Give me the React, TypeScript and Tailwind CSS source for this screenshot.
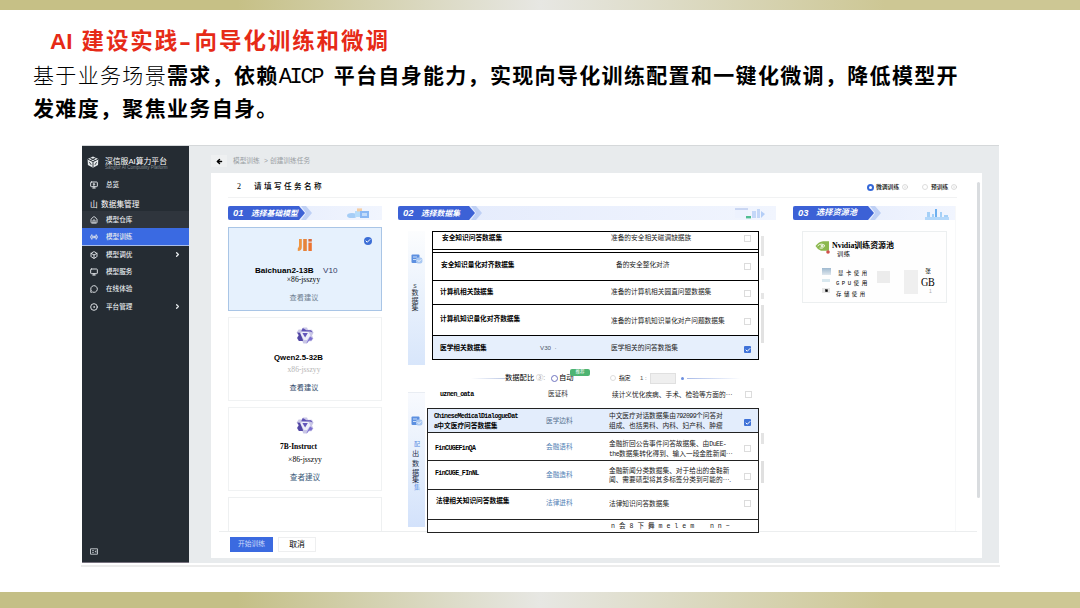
import type { ReactNode } from "react";
import clsx from "clsx";
import {
  ArrowLeft,
  Box,
  Check,
  ChevronRight,
  CircleDot,
  House,
  Info,
  MessageCircle,
  Monitor,
  MonitorPlay,
  Radio,
  Square,
} from "lucide-react";

const sans = "font-['Liberation_Sans','Noto_Sans_CJK_SC',sans-serif]";
const serif = "font-['Liberation_Serif','Noto_Sans_CJK_SC',serif]";

function Logo() {
  return (
    <svg viewBox="0 0 12 12" className="size-[12px] shrink-0">
      <path d="M6 0.4 11.3 3 11 9 6 11.7 0.9 9 0.6 3z" fill="#e4e8ea" />
      <path d="M0.8 3.2 6 5.7 11.2 3.2M6 5.7v5.8M3 1.9l5.4 2.6M8.8 1.8 3.4 4.5M2.4 6.2l1.8 2.6M8 8.8l1.6-2.6" stroke="#252c33" strokeWidth="0.9" fill="none" />
    </svg>
  );
}

function BaichuanIcon() {
  return (
    <svg viewBox="0 0 16 14" className="h-[14px] w-[16px]">
      <path d="M4.8 1v8.2Q4.8 12.6 0.8 13V10Q2 9.5 2 7.5V1z" fill="#ee9440" />
      <path d="M6.2 1h3.6v12H6.2z" fill="#e6843a" />
      <path d="M11.4 4.6h3.4V13h-3.4z" fill="#ec7430" />
      <path d="M11.4 1h3.4v2.6h-3.4z" fill="#d9693a" />
    </svg>
  );
}

function QwenIcon() {
  return (
    <svg viewBox="0 0 18 17" className="h-[17px] w-[18px]">
      <path d="M7 0.6h4l1 2.2h4l1.6 3-1.6 2.8 1.4 2.8-2 2.8h-3.2L10.6 16.4H7.4L6.2 14H2.6L0.8 11l1.6-2.8L0.6 5.4l2-2.8h3.2z" fill="#c9c6e6" />
      <path d="M6.8 1 5.2 4.2l8.8.2 2.6 1.2L15 3.2h-4.6z" fill="#5e50b4" />
      <path d="M1.2 5.6 4 5.8l3.2 7.8L6.4 14H3l-1.8-3 1.6-2.8z" fill="#5145a4" />
      <path d="M16.8 11.2 14 9.6l-3.6 6.6h.6l2.2-2.6h2.2z" fill="#7d70d0" />
      <path d="M5.6 5h7l1.8 3.6L11 13H8L4.6 6.6z" fill="#efeefa" />
      <path d="M6.4 6h5.4L9.1 10.6z" fill="#6455bb" />
    </svg>
  );
}

function StackIcon() {
  return (
    <svg viewBox="0 0 12 10" className="h-[10px] w-[12px]">
      <rect x="0.5" y="0.5" width="8" height="8.6" rx="1" fill="#5d90e0" />
      <path d="M2 3h4M2 5.5h3" stroke="#d7e6fb" strokeWidth="0.9" />
      <rect x="5" y="3.6" width="6.4" height="5.8" rx="2" fill="#a9c8f2" />
      <path d="M6.6 6.2 8 7.6l2.2-2.2" stroke="#fff" strokeWidth="0.9" fill="none" />
    </svg>
  );
}

function CollapseIcon() {
  return (
    <svg viewBox="0 0 8 7" className="mt-auto mb-[7px] ml-[8px] h-[7px] w-[8px]">
      <path d="M0.5 0.8h7v5.4h-7z" stroke="#b9bfc4" fill="none" />
      <path d="M2 2.6h2M2 4.4h2" stroke="#b9bfc4" strokeWidth="0.8" />
      <path d="M4.6 3.5 6.4 2v3z" fill="#b9bfc4" />
    </svg>
  );
}

type NavProps = {
  icon: ReactNode;
  label: string;
  className?: string;
  arrow?: boolean;
};

function NavItem({ icon, label, className, arrow }: NavProps) {
  return (
    <div className={clsx("flex items-center pl-[8px] text-[6.6px] text-[#e6eaed]", className)}>
      <span className="w-4 [&>svg]:size-[8px] [&>svg]:stroke-[2.8]">{icon}</span>
      <span className="flex-1 font-medium">{label}</span>
      {arrow && <ChevronRight className="mr-[8px] size-[7px]" strokeWidth={4.5} />}
    </div>
  );
}

function Sidebar() {
  return (
    <aside className="flex w-[107px] flex-col border-b border-[#77727f] bg-[#252c33]">
      <div className="flex h-[31px] items-center gap-[6px] pl-[5px]">
        <Logo />
        <div className="flex flex-col whitespace-nowrap pt-[4px]">
          <span className="text-[7.8px] leading-[9px] text-white">深信服AI算力平台</span>
          <span className="text-[4.5px] leading-[4px] text-[#848b91]">Sangfor AI Computility Platform</span>
        </div>
      </div>
      <NavItem icon={<MonitorPlay />} label="总览" className="h-[16px]" />
      <div className="flex h-[18px] items-center pt-[6px] pl-[8px] text-[7.7px] text-white">
        <span className="w-[11px]">山</span>数据集管理
      </div>
      <NavItem icon={<House />} label="模型仓库" className="h-[17px] bg-[#2f353d]" />
      <NavItem icon={<Radio />} label="模型训练" className="h-[18px] border-b border-[#a8bce8] bg-[#3a6ae2]" />
      <NavItem icon={<Box />} label="模型调优" className="h-[17px]" arrow />
      <NavItem icon={<Monitor />} label="模型服务" className="h-[17.5px]" />
      <NavItem icon={<MessageCircle />} label="在线体验" className="h-[17.5px]" />
      <NavItem icon={<CircleDot />} label="平台管理" className="h-[17px]" arrow />
      <CollapseIcon />
    </aside>
  );
}

type StepProps = {
  no: string;
  title: string;
  art: ReactNode;
  labelClass: string;
};

function StepHeader({ no, title, art, labelClass }: StepProps) {
  return (
    <div className="flex h-[14px] shrink-0 items-center justify-between bg-linear-to-r from-[#e3eafc] to-[#f1f5fe] pr-1">
      <div className="flex h-full">
        <div
          className={clsx(
            "flex h-full items-center rounded-l-[2px] bg-[#3c61d6] pt-px pl-[5px] font-bold text-white italic [clip-path:polygon(0_0,calc(100%-6px)_0,100%_50%,calc(100%-6px)_100%,0_100%)]",
            labelClass,
          )}
        >
          <span className="w-[18px] text-[9.4px]">{no}</span>
          <span>{title}</span>
        </div>
        <div className="-ml-[4px] h-full w-[11px] bg-[#bfd0f5] [clip-path:polygon(0_0,5px_0,100%_50%,5px_100%,0_100%,5px_50%)]" />
      </div>
      {art}
    </div>
  );
}

function CloudArt() {
  return (
    <svg viewBox="0 0 28 12" className="mr-1 h-[12px] w-[28px]">
      <ellipse cx="6" cy="8.5" rx="5" ry="2.6" fill="#a5cdf6" />
      <path d="M9 4h8v6H9z" fill="#b6dcfa" />
      <path d="M11 1.4h5v3h-5z" fill="#f3cda4" />
      <path d="M14 4h9v7h-9z" fill="#8bb8f4" />
      <path d="M16 6h5v3h-5z" fill="#c4dcfa" />
    </svg>
  );
}

function WindowArt() {
  return (
    <svg viewBox="0 0 32 12" className="mr-[6px] h-[12px] w-[32px]">
      <path d="M1 2h13v9H1z" fill="#edf2fe" />
      <path d="M1 2h13" stroke="#a4b8e6" />
      <path d="M12 9h5v2.4h-5z" fill="#4fbd92" />
      <path d="M18 4h4v7h-4zM23 2h3v9h-3z" fill="#c3d7f8" />
      <path d="M27 4l4 3-4 4z" fill="#b4cef7" />
    </svg>
  );
}

function CityArt() {
  return (
    <svg viewBox="0 0 24 13" className="mr-[2px] h-[13px] w-[24px]">
      <path d="M2 5h3v8H2zM7 7h2v6H7zM15 5h2v8h-2zM19 8h4v5h-4z" fill="#a5d0f7" />
      <path d="M10 2h2v11h-2z" fill="#6eb0ef" />
      <path d="M0 10h24v3H0z" fill="#b4d8fa" />
    </svg>
  );
}

function ModelColumn() {
  return (
    <div className="flex w-[154px] flex-col">
      <StepHeader no="01" title="选择基础模型" labelClass="w-[77px] text-[7.8px]" art={<CloudArt />} />
      <div className="relative mt-[7px] flex h-[84px] flex-col items-center border border-[#a9c5e6] bg-[#e6f1fd] pt-[10px]">
        <div className="absolute top-[9px] right-[9px] flex size-[8px] items-center justify-center rounded-full bg-[#3c6ed6]">
          <Check className="size-[6px] text-white" strokeWidth={4} />
        </div>
        <BaichuanIcon />
        <div className="mt-[14px] flex w-full pl-[26px] text-[8.1px] leading-[10px]">
          <b className="w-[68px]">Baichuan2-13B</b>
          <span className="text-[#333b66]">V10</span>
        </div>
        <div className={clsx("-mt-px -ml-[3px] text-[7.6px] leading-[9px]", serif)}>×86-jsszyy</div>
        <div className="mt-[9px] -ml-[2px] text-[7.2px] leading-[10px] text-[#6d7c8e]">查看建议</div>
      </div>
      <div className="mt-[6px] flex h-[84px] flex-col items-center border border-[#f0f2f3] pt-[9px]">
        <QwenIcon />
        <b className="mt-[9px] -ml-[13px] text-[7.8px] leading-[10px]">Qwen2.5-32B</b>
        <div className={clsx("mt-[2px] -ml-[2px] text-[7.6px] leading-[10px] text-[#b5b5b5]", serif)}>x86-jsszyy</div>
        <div className="mt-[8px] -ml-[2px] text-[7.2px] leading-[10px] text-[#2e4668]">查看建议</div>
      </div>
      <div className="mt-[6px] flex h-[84px] flex-col items-center border border-[#f0f2f3] pt-[9px]">
        <QwenIcon />
        <b className={clsx("mt-[8px] -ml-[13px] text-[7.5px] leading-[10px]", serif)}>7B-Instruct</b>
        <div className={clsx("mt-[3px] text-[7.7px] leading-[10px]", serif)}>×86-jsszyy</div>
        <div className="mt-[8px] text-[7.6px] leading-[10px] text-[#3a5a78]">查者建议</div>
      </div>
      <div className="mt-[6px] h-[34px] border border-b-0 border-[#eef0f1]" />
    </div>
  );
}

type RowProps = {
  height: string;
  name?: ReactNode;
  nameClass?: string;
  tag?: string;
  tagClass?: string;
  desc?: ReactNode;
  descClass?: string;
  box?: "empty" | "checked" | "none";
  boxClass?: string;
};

// name / tag / description / checkbox, aligned from the right edge
function Row({ height, name, nameClass, tag, tagClass, desc, descClass, box = "empty", boxClass }: RowProps) {
  return (
    <div className={clsx("flex items-start text-[6.7px] leading-[9px] whitespace-nowrap", height)}>
      <div className={clsx("flex-1 font-bold", nameClass)}>{name}</div>
      <div className={clsx("w-[64px]", tagClass)}>{tag}</div>
      <div className={clsx("w-[133px] text-[#222]", descClass)}>{desc}</div>
      <div className={clsx("w-[14px]", boxClass)}>
        {box === "empty" && <div className="size-[7px] border border-[#dcdcdc]" />}
        {box === "checked" && (
          <div className="flex size-[7px] items-center justify-center rounded-[1px] bg-[#3f72d8]">
            <Check className="size-[6px] text-white" strokeWidth={4} />
          </div>
        )}
      </div>
    </div>
  );
}

function Mono({ children }: { children: string }) {
  return <span className="font-['Liberation_Mono',monospace] text-[6.6px] tracking-[-0.6px]">{children}</span>;
}

function DatasetColumn() {
  return (
    <div className="flex w-[378px] flex-col">
      <StepHeader no="02" title="选择数据集" labelClass="w-[77px] text-[7.8px]" art={<WindowArt />} />
      <div className="mt-[11px] flex h-[129px] shrink-0 pl-[10px]">
        <div className="flex h-[134px] w-[17px] flex-col items-center bg-linear-to-b from-[#fcfdfe] via-[#e9f1fc] to-[#d8e6fb] pt-[23px]">
          <StackIcon />
          <div className="mt-[19px] -ml-[3px] flex flex-col items-center text-[7px] leading-[7.6px] text-[#2a3240]">
            <span className="text-[5px] leading-[6px]">S</span>
            <span>数</span>
            <span>据</span>
            <span>集</span>
          </div>
        </div>
        <div className="ml-[7px] w-[327px] border border-b-0 border-black bg-white">
          <Row height="h-[18px] border-b border-black" name="安全知识问答数据集" nameClass="pl-[9px] pt-[1px]" desc="准备的安全相关磁调缺据族" descClass="pt-[1px]" boxClass="pt-[3px]" />
          <div className="h-[3px] border-b border-black" />
          <Row height="h-[28px] border-b border-black" name="安全知识量化对齐数据集" nameClass="pl-[8px] pt-[7px]" desc="备的安全整化对济" descClass="pl-[5px] pt-[7px]" boxClass="pt-[10px]" />
          <Row height="h-[24px] border-b border-black" name="计算机相关鼓据集" nameClass="pl-[7px] pt-[6px]" desc="准备的计算机相关圆直问盟数据集" descClass="pt-[6px]" boxClass="pt-[9px]" />
          <Row height="h-[31px] border-b border-black" name="计算机知识量化对齐数据集" nameClass="pl-[7px] pt-[9px]" desc="准备的计算机知识量化对产问题数据集" descClass="pt-[11px]" boxClass="pt-[13px]" />
          <Row height="h-[24px] border-b border-black bg-[#e6effc]" name="医学相关数据集" nameClass="pl-[7px] pt-[7px]" tag="V30  ·" tagClass="-ml-[7px] mr-[7px] pt-[7px] text-[6.2px] whitespace-pre text-[#4a5566]" desc="医学相关的问答数指集" descClass="pt-[7px]" box="checked" boxClass="pt-[10px]" />
        </div>
        <div className="ml-[2px] flex w-[3px] flex-col pt-[5px]">
          <div className="h-[20px] bg-[#e6e6e6]" />
          <div className="mt-[12px] h-[12px] bg-[#ececec]" />
          <div className="mt-[13px] h-[6px] bg-[#e6e6e6]" />
          <div className="mt-[6px] h-[38px] bg-[#e2e2e2]" />
        </div>
      </div>

      <div className="mt-[8px] flex h-[20px] shrink-0 items-center pl-[73px] text-[7.3px] whitespace-nowrap">
        <span className="h-px w-[34px] bg-linear-to-r from-white to-[#bcc8e4]" />
        <span className="w-[31px]">数据配比</span>
        <span className="w-[15px] text-[#999]">③:</span>
        <span className="mr-[1px] size-[7px] rounded-full border border-[#6f74c0]" />
        <span className="relative w-[51px]">
          自动
          <span className="absolute -top-[4px] left-[11px] flex h-[7px] w-[20px] items-center justify-center rounded-[2px] bg-[#4eb472] text-[4.6px] text-white">推荐</span>
        </span>
        <span className="mr-[3px] size-[6px] rounded-full border border-[#ddd]" />
        <span className="w-[21px] text-[5.8px]">指定</span>
        <span className="w-[10px] text-[6px] text-[#555]">1 :</span>
        <span className="h-[11px] w-[26px] border border-[#e0e0e0] bg-[#efefef]" />
        <span className="ml-[5px] size-[3px] rounded-full bg-[#6c8fe0]" />
        <span className="ml-[3px] h-px w-[54px] bg-linear-to-r from-[#a9bbe8] to-white" />
      </div>

      {/* last table edge runs one pixel over the footer rule */}
      <div className="relative z-10 flex h-[143px] shrink-0 pl-[10px]">
        <div className="mt-[4px] flex h-[135px] w-[17px] flex-col items-center border-t border-[#e9edf3] bg-linear-to-b from-[#f8fafe] via-[#e6effc] to-[#d3e2fb] pt-[23px]">
          <StackIcon />
          <div className="mt-[13px] -ml-[2px] flex flex-col items-center text-[7.2px] leading-[10px] text-[#1f2f4a]">
            <span className="-mr-[3px] text-[6px] text-[#5a8fe4]">配</span>
            <span>出</span>
            <span>数</span>
            <span className="-mt-px">据</span>
            <span className="-mt-[2px] leading-[8px]">集</span>
            <span className="-mr-[3px] text-[6px] leading-[6px] text-[#5a8fe4]">集</span>
          </div>
        </div>
        <div className="ml-[2px] w-[332px]">
          <Row height="h-[20px]" name={<Mono>uznen_oata</Mono>} nameClass="pl-[13px] pt-[1px]" tag="医证科" tagClass="pt-[1px] text-[#333]" desc="续计义忧化疾病、手术、检验等方面的···" descClass="pt-[2px]" boxClass="pt-[3px]" />
          <div className="border border-[#222] bg-white">
            <Row
              height="h-[24px] border-b border-[#222] bg-[#e3edfc]"
              name={
                <>
                  <Mono>ChineseMedicalDialogueDat</Mono>
                  <br />
                  <Mono>a</Mono>中文医疗问答数据集
                </>
              }
              nameClass="pl-[6px] pt-[2px]"
              tag="医学边料"
              tagClass="-ml-[1px] mr-[1px] pt-[7px] text-[#55708f]"
              desc={
                <>
                  中文医疗对话数据集由<Mono>792099</Mono>个问答对
                  <br />
                  组成、也括男科、内科、妇产科、肿瘤
                </>
              }
              descClass="-ml-[2px] mr-[2px] pt-[2px]"
              box="checked"
              boxClass="pt-[10px]"
            />
            <Row
              height="h-[28px] border-b border-[#222]"
              name={<Mono>FinCUGEFinQA</Mono>}
              nameClass="pl-[7px] pt-[10px]"
              tag="会融语科"
              tagClass="-ml-[1px] mr-[1px] pt-[9px] text-[#5181b5]"
              desc={
                <>
                  金融折回公告事件问答故据集、由<Mono>DuEE-</Mono>
                  <br />
                  <Mono>the</Mono>数据集转化得到、输入一段金胜新闻···
                </>
              }
              descClass="-ml-[2px] mr-[2px] pt-[6px]"
              boxClass="pt-[12px]"
            />
            <Row
              height="h-[29px] border-b border-[#222]"
              name={<Mono>FinCUGE_FInNL</Mono>}
              nameClass="pl-[7px] pt-[7px]"
              tag="金融造科"
              tagClass="-ml-[1px] mr-[1px] pt-[9px] text-[#5181b5]"
              desc={
                <>
                  金融新闻分类数掘集、对于给出的金鞋新
                  <br />
                  闻、需要碛型将其多标签分类到可能的···.
                </>
              }
              descClass="-ml-[2px] mr-[2px] pt-[5px]"
              boxClass="pt-[12px]"
            />
            <Row height="h-[30px] border-b border-[#222]" name="法律相关知识问答数据集" nameClass="pl-[8px] pt-[6px]" tag="法律进科" tagClass="-ml-[1px] mr-[1px] pt-[8px] text-[#5181b5]" desc="法律知识问答数据集" descClass="-ml-[2px] mr-[2px] pt-[9px]" boxClass="pt-[10px]" />
            <Row height="h-[12px]" desc="n 会 8 下 舞 m e l e m    n n ~" descClass="pt-[2px] font-['Liberation_Mono','Noto_Sans_CJK_SC',monospace] whitespace-pre text-[6.6px]" box="none" />
          </div>
        </div>
        <div className="ml-[2px] flex w-[3px] flex-col pt-[45px]">
          <div className="h-[11px] bg-[#e4e4e4]" />
          <div className="mt-[17px] h-[22px] bg-[#e0e0e0]" />
        </div>
      </div>
    </div>
  );
}

function PoolColumn() {
  return (
    <div className="flex w-[163px] flex-col border-r border-[#f7f8f9]">
      <StepHeader no="03" title="选择资源池" labelClass="w-[81px] text-[8.2px]" art={<CityArt />} />
      <div className="mt-[11px] ml-[9px] h-[72px] w-[145px] border border-[#eceff0] bg-[#fefefe]">
        <div className="flex pt-[8px] pl-[12px]">
          <svg viewBox="0 0 16 14" className="mr-[1px] h-[14px] w-[16px]">
            <path d="M0.5 6Q4 1.5 8 1.2h6v9.6H6Q2.5 9.5 0.5 6z" fill="#8bb84e" />
            <path d="M2.6 6Q6 2.4 10 5.6 7.4 9.4 4.6 8" stroke="#f2f8e8" strokeWidth="1" fill="none" />
            <circle cx="7" cy="6" r="1.4" fill="#e6f0d4" />
            <circle cx="13" cy="12" r="1.8" fill="#d0504a" />
          </svg>
          <div className="flex flex-col pt-px">
            <b className={clsx("text-[7.9px] leading-[9px] whitespace-nowrap", serif)}>Nvidia训练资源池</b>
            <span className="pl-[5px] text-[6.2px] leading-[7px] tracking-[0.6px]">训练</span>
          </div>
        </div>
        <div className="flex pt-[10px] pl-[19px]">
          <div className="flex w-[13px] flex-col pt-px">
            <div className="h-[7px] w-[9px] bg-linear-to-b from-[#9fb9cf] to-[#dfe7ee]" />
            <div className="mt-[4px] h-[3px] w-[8px] bg-[#d9e8ef]" />
            <div className="mt-[6px] flex h-[5px] w-[8px] items-center justify-center bg-[#e5e5e5]">
              <Square className="size-[3px] fill-black" />
            </div>
          </div>
          <div className="flex w-[42px] flex-col pt-px text-[5.4px] leading-[10.5px] tracking-[2.5px] whitespace-nowrap">
            <span className="pl-[3px]">显卡使用</span>
            <span className="pl-[1px] font-['Liberation_Mono','Noto_Sans_CJK_SC',monospace] text-[5.6px]">GPU使用</span>
            <span className="pl-[1px]">存储使用</span>
          </div>
          <div className="mt-[4px] h-[12px] w-[13px] bg-[#ececec]" />
          <div className="mt-[3px] ml-[14px] h-[24px] w-[14px] bg-[#efefef]" />
          <div className="ml-[1px] flex w-[18px] flex-col items-center pt-px">
            <span className="text-[5.5px] leading-[7px]">张</span>
            <span className={clsx("scale-x-[0.78] text-[13px] leading-[14px] tracking-tight", serif)}>GB</span>
            <span className="pl-[5px] text-[5px] leading-[5px] text-[#aaa]">1</span>
          </div>
        </div>
      </div>
    </div>
  );
}

function Workspace() {
  return (
    <main className="flex flex-1 flex-col bg-[#e8ebed] pl-[22px]">
      <div className="flex h-[27px] items-center pt-[3px] text-[6.7px] text-[#999ea3]">
        <div className="mr-[6px] flex h-[12px] w-[16px] items-center justify-center bg-[#eef0f1]">
          <ArrowLeft className="size-[7px] text-black" strokeWidth={5} />
        </div>
        <span className="w-[31px]">模型训练</span>
        <span className="w-[6px]">&gt;</span>
        <span>创建训练任务</span>
      </div>
      <div className="flex h-[385px] w-[771px] bg-white">
        <div className="flex w-[766px] flex-col">
          <div className="mr-[20px] ml-[17px] flex h-[25px] items-center border-b border-[#f1f2f3] pt-[4px] pl-[9px]">
            <span className={clsx("w-[17px] text-[8px]", serif)}>2</span>
            <span className="flex-1 text-[7.6px] font-medium tracking-[2.4px]">请填写任务名称</span>
            <div className="flex items-center text-[5.8px]">
              <span className="mr-[2px] flex size-[7px] items-center justify-center rounded-full bg-[#3568d8]">
                <span className="size-[3px] rounded-full bg-white" />
              </span>
              <span className="w-[26px] font-medium">微调训练</span>
              <Info className="mr-[14px] size-[6px] text-[#bbb]" />
              <span className="mr-[3px] size-[6px] rounded-full border border-[#ddd]" />
              <span className="w-[20px] font-medium">预训练</span>
              <Info className="size-[6px] text-[#bbb]" />
            </div>
          </div>
          <div className="flex h-[333px] pt-[8px] pl-[17px]">
            <ModelColumn />
            <div className="w-[16px] shrink-0" />
            <DatasetColumn />
            <div className="w-[17px] shrink-0" />
            <PoolColumn />
          </div>
          <div className="ml-[8px] flex h-[27px] border-t border-[#eceeef] pt-[5px] pl-[11px] text-[7.4px]">
            <div className="flex h-[15px] w-[43px] items-center justify-center bg-[#3b6ae0] text-[6.8px] text-[#cddafa]">开始训练</div>
            <div className="ml-[5px] flex h-[15px] w-[38px] items-center justify-center border border-[#eeeff0] text-[7.8px]">取消</div>
          </div>
        </div>
        <div className="mt-[9px] h-[316px] w-[3px] rounded-full bg-[#d9dcdf]" />
      </div>
    </main>
  );
}

export default function App() {
  return (
    <div className={clsx("flex h-[608px] w-[1080px] flex-col overflow-hidden bg-white text-black", sans)}>
      <div className="h-[10px] shrink-0 bg-linear-to-r from-[#c6c086] via-[#e7e7e3] to-[#cdc794] from-22% via-50% to-82%" />
      <header className="flex h-[135px] shrink-0 flex-col pt-[16px] whitespace-nowrap">
        <h1 className="flex h-[32px] pl-[50px] text-[22.5px] leading-[32px] font-bold tracking-[1.9px] text-[#e62a17]">
          <span className="w-[31.5px] tracking-normal">AI</span>
          <span>建设实践</span>
          <span className="w-[15.5px] origin-left scale-x-[1.6] tracking-normal">-</span>
          <span>向导化训练和微调</span>
        </h1>
        <div className="mt-[1px] pl-[33px] text-[21px] font-bold tracking-[1.33px]">
          <p className="flex h-[33px] leading-[33px]">
            <span className="font-light">基于业务场景</span>
            <span>需求，依赖</span>
            <span className="w-[55px] pt-[2px] font-['Liberation_Mono',monospace] text-[22px] font-normal tracking-[-2.3px]">AICP</span>
            <span>平台自身能力，实现向导化训练配置和一键化微调，降低模型开</span>
          </p>
          <p className="h-[33px] leading-[33px]">发难度，聚焦业务自身。</p>
        </div>
      </header>
      <div className="ml-[82px] flex h-[418px] w-[917px] shrink-0 border-t border-[#d5d8da]">
        <Sidebar />
        <Workspace />
      </div>
      <div className="mt-[2px] ml-[81px] h-[2px] w-[919px] shrink-0 bg-[#ececec]" />
      <div className="mt-auto h-[16px] shrink-0 bg-linear-to-r from-[#c4bf86] via-[#e7e7e3] to-[#cdc794] from-22% via-50% to-82%" />
    </div>
  );
}
